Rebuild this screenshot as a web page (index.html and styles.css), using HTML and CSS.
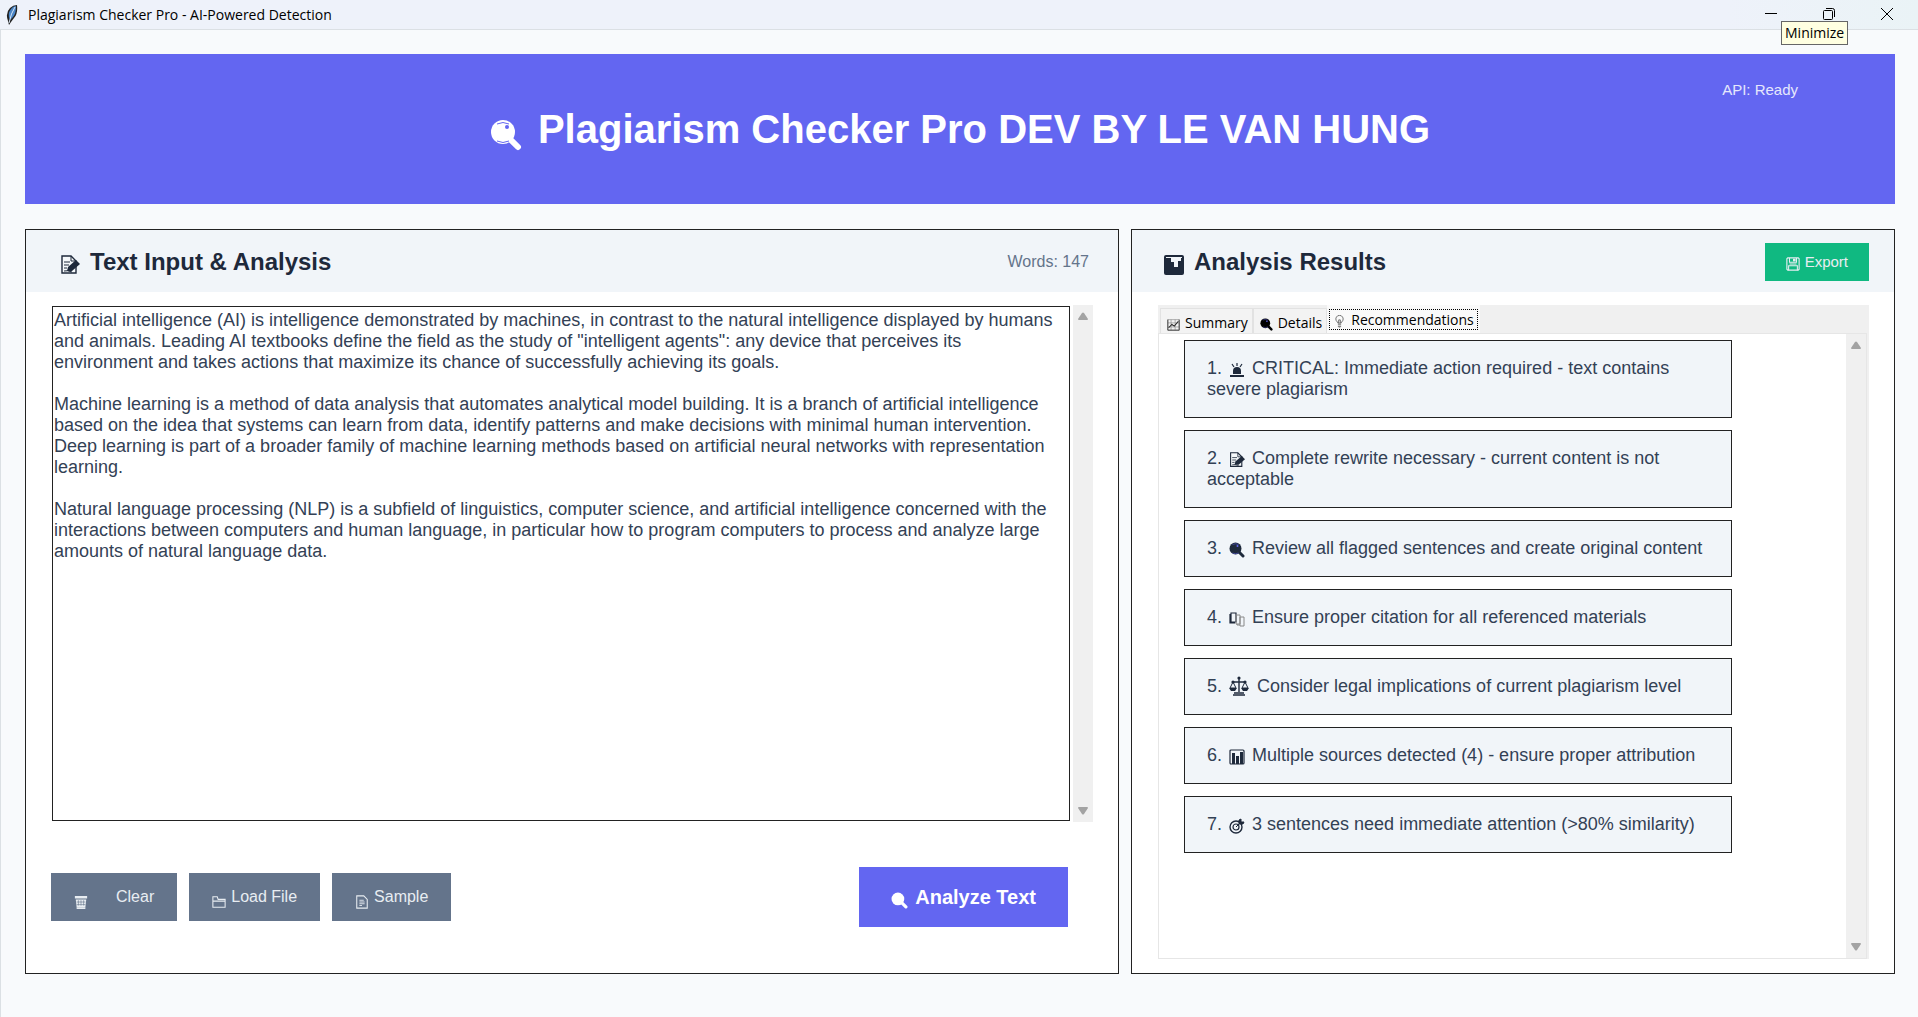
FILE: index.html
```html
<!DOCTYPE html>
<html lang="en">
<head>
<meta charset="utf-8">
<title>Plagiarism Checker Pro - AI-Powered Detection</title>
<link rel="stylesheet" href="styles.css">
</head>
<body>
<svg class="sprite" aria-hidden="true">
  <symbol id="lens" viewBox="0 0 32 32">
    <path d="M20 20l8 8" stroke="currentColor" stroke-width="6" stroke-linecap="round"/>
    <circle cx="13" cy="13" r="12" fill="currentColor"/>
    <path d="M7 5q6-3 12 0M7 22q6 3 12 0" fill="none" stroke="var(--shine)" stroke-width="1"/>
    <circle cx="17" cy="8" r="2" fill="var(--shine)"/>
  </symbol>
  <symbol id="memo" viewBox="0 0 20 20">
    <path d="M2 1h9l5 5v12H2z" fill="#fff" fill-opacity=".4" stroke="currentColor" stroke-width="1.400"/>
    <path d="M11 1v5h5M4 7h6M4 10h5M4 13h3" fill="none" stroke="currentColor" stroke-width="1"/>
    <path d="M7 16l1-4 8-7 4 4-8 7z" fill="currentColor"/>
    <path d="M4 16q3-1 8 1" stroke="currentColor" fill="none"/>
  </symbol>
  <symbol id="report" viewBox="0 0 20 20">
    <rect x="0" y="0" width="20" height="20" rx="2" fill="currentColor"/>
    <path d="M2 2h16v1H2zM7 3h10v3h-3v6h-4V7H7z" fill="#f1f5f9"/>
  </symbol>
  <symbol id="floppy" viewBox="0 0 16 16">
    <path d="M2 1h12l1 1v12l-1 1H2l-1-1V2z" fill="none" stroke="currentColor" stroke-width="1.300"/>
    <path d="M4 1v5h8V1M3 15v-5h10v5M4 8h8" fill="none" stroke="currentColor" stroke-width="1.200"/>
    <path d="M8 2h3v3H8z" fill="currentColor"/>
  </symbol>
  <symbol id="trash" viewBox="0 0 16 16">
    <path d="M1 1h14v3H1zM2 5h12l-1 9H3z" fill="currentColor"/>
    <path d="M5 6v6M8 6v6M11 6v6M3 8h10M3 11h10" stroke="#64748b" stroke-width=".7"/>
    <path d="M3 14h10v2H3z" fill="currentColor"/>
  </symbol>
  <symbol id="folder" viewBox="0 0 16 16">
    <path d="M1 14V2h5l1 3h8v9zM1 7h14" fill="none" stroke="currentColor" stroke-width="1.200"/>
  </symbol>
  <symbol id="page" viewBox="0 0 16 16">
    <path d="M2 1h8l4 4v10H2z" fill="none" stroke="currentColor" stroke-width="1.200"/>
    <path d="M5 6h5M5 8h6M5 10h6M5 12h3" stroke="currentColor" stroke-width="1"/>
  </symbol>
  <symbol id="trend" viewBox="0 0 16 16">
    <path d="M1 2h14v13H1zM1 6h14M1 11h14M5 2v13M10 2v13" fill="none" stroke="#888" stroke-width=".8"/>
    <path d="M1 2v13h14V2" fill="none" stroke="#333"/>
    <path d="M2 12l4-4 3 2 5-6" fill="none" stroke="#222" stroke-width="1.300"/>
  </symbol>
  <symbol id="bulb" viewBox="0 0 16 16">
    <path d="M6 10q0-1-2-3a4.500 4.500 0 1 1 8 0q-2 2-2 3z" fill="none" stroke="#555"/>
    <path d="M7 10V6h2v4M6 12h4M6 14h4M7 16h2" fill="none" stroke="#555"/>
  </symbol>
  <symbol id="siren" viewBox="0 0 16 16">
    <path d="M4 12V9a4 4 0 0 1 8 0v3zM1 13h14v2H1z" fill="currentColor"/>
    <path d="M8 1v3M3 2l2 3M13 2l-2 3" stroke="currentColor" stroke-width="1.200"/>
  </symbol>
  <symbol id="books" viewBox="0 0 16 16">
    <path d="M2 2h5v9H2zM1 3v9h5" fill="none" stroke="currentColor" stroke-width="1.200"/>
    <path d="M7 4h4v9H7zM11 6h4v9h-4zM8 13v1h3" fill="none" stroke="#888"/>
  </symbol>
  <symbol id="scales" viewBox="0 0 20 20">
    <path d="M10 2v14M5 17h10M4 19h12M3 6h14" stroke="currentColor" stroke-width="1.400" fill="none"/>
    <circle cx="10" cy="2" r="1.600" fill="currentColor"/><circle cx="4" cy="6" r="1.600" fill="currentColor"/><circle cx="16" cy="6" r="1.600" fill="currentColor"/>
    <path d="M4 6l-3 6h6zM16 6l-3 6h6z" fill="none" stroke="currentColor"/>
    <path d="M0 12h8l-2 3H2zM12 12h8l-2 3h-4z" fill="currentColor"/>
  </symbol>
  <symbol id="bars" viewBox="0 0 16 16">
    <rect x="1" y="1" width="14" height="14" rx="1" fill="none" stroke="currentColor" stroke-width="1.200"/>
    <path d="M3 4h3v11H3zM7 7h3v8H7zM11 3h3v12h-3z" fill="currentColor"/>
  </symbol>
  <symbol id="target" viewBox="0 0 16 16">
    <circle cx="7" cy="9" r="6" fill="none" stroke="currentColor" stroke-width="1.400"/>
    <circle cx="7" cy="9" r="3" fill="none" stroke="currentColor" stroke-width="1.200"/>
    <path d="M7 9l5-5M10 5V2l2-1v3h3l-1 2h-4z" stroke="currentColor" fill="currentColor"/>
  </symbol>
  <symbol id="up" viewBox="0 0 12 10"><path d="M1 8l4-6q1-1 2 0l4 6q0 1-1 1H2q-1 0-1-1z" fill="#a3a3a3"/></symbol>
  <symbol id="down" viewBox="0 0 12 10"><path d="M1 2l4 6q1 1 2 0l4-6q0-1-1-1H2q-1 0-1 1z" fill="#a3a3a3"/></symbol>
</svg>

<header class="titlebar">
  <svg class="feather" viewBox="0 0 12 20" aria-hidden="true">
    <path d="M11 0q1 9-3 13l-3 4-2 3-1-4Q-1 8 4 3q3-3 7-3z" fill="#222"/>
    <path d="M10 1q0 8-3 11l-3 3q-3-6 1-11 2-3 5-3z" fill="#4a86c8"/>
    <path d="M9 2Q5 8 3 18" stroke="#d8e6f4" fill="none"/>
  </svg>
  <span class="window-title">Plagiarism Checker Pro - AI-Powered Detection</span>
  <div class="controls">
    <button aria-label="Minimize"><svg viewBox="0 0 14 14"><path d="M1 6.500h12"/></svg></button>
    <button aria-label="Restore"><svg viewBox="0 0 14 14"><rect x="1.500" y="3.500" width="9" height="9" rx="1"/><path d="M4 1.500h6.500q2 0 2 2V10"/></svg></button>
    <button aria-label="Close"><svg viewBox="0 0 14 14"><path d="M1 1l12 12M13 1L1 13"/></svg></button>
    <span class="tooltip" role="tooltip">Minimize</span>
  </div>
</header>

<main class="app">
  <section class="banner">
    <h1><svg class="lens-large"><use href="#lens"/></svg>Plagiarism Checker Pro DEV BY LE VAN HUNG</h1>
    <span class="status">API: Ready</span>
  </section>

  <div class="panels">
    <section class="panel">
      <div class="panel-head">
        <h2><svg><use href="#memo"/></svg><label for="source">Text Input &amp; Analysis</label></h2>
        <span class="words">Words: 147</span>
      </div>
      <div class="editor">
        <textarea id="source" spellcheck="false">Artificial intelligence (AI) is intelligence demonstrated by machines, in contrast to the natural intelligence displayed by humans and animals. Leading AI textbooks define the field as the study of "intelligent agents": any device that perceives its environment and takes actions that maximize its chance of successfully achieving its goals.

Machine learning is a method of data analysis that automates analytical model building. It is a branch of artificial intelligence based on the idea that systems can learn from data, identify patterns and make decisions with minimal human intervention. Deep learning is part of a broader family of machine learning methods based on artificial neural networks with representation learning.

Natural language processing (NLP) is a subfield of linguistics, computer science, and artificial intelligence concerned with the interactions between computers and human language, in particular how to program computers to process and analyze large amounts of natural language data.</textarea>
        <div class="scrollbar"><svg><use href="#up"/></svg><svg><use href="#down"/></svg></div>
      </div>
      <div class="actions">
        <button class="btn spaced"><svg><use href="#trash"/></svg>Clear</button>
        <button class="btn"><svg><use href="#folder"/></svg>Load File</button>
        <button class="btn"><svg><use href="#page"/></svg>Sample</button>
        <button class="btn primary"><svg><use href="#lens"/></svg>Analyze Text</button>
      </div>
    </section>

    <section class="panel">
      <div class="panel-head results-head">
        <h2><svg><use href="#report"/></svg>Analysis Results</h2>
        <button class="btn export"><svg><use href="#floppy"/></svg>Export</button>
      </div>
      <div class="notebook">
        <div class="tabs" role="tablist">
          <button class="tab" role="tab"><svg><use href="#trend"/></svg>Summary</button>
          <button class="tab" role="tab"><svg><use href="#lens"/></svg>Details</button>
          <button class="tab active" role="tab" aria-selected="true"><span><svg><use href="#bulb"/></svg>Recommendations</span></button>
        </div>
        <div class="tab-body">
          <ul class="cards">
            <li>1. <svg><use href="#siren"/></svg> CRITICAL: Immediate action required - text contains severe plagiarism</li>
            <li>2. <svg><use href="#memo"/></svg> Complete rewrite necessary - current content is not acceptable</li>
            <li>3. <svg><use href="#lens"/></svg> Review all flagged sentences and create original content</li>
            <li>4. <svg><use href="#books"/></svg> Ensure proper citation for all referenced materials</li>
            <li>5. <svg class="wide"><use href="#scales"/></svg> Consider legal implications of current plagiarism level</li>
            <li>6. <svg><use href="#bars"/></svg> Multiple sources detected (4) - ensure proper attribution</li>
            <li>7. <svg><use href="#target"/></svg> 3 sentences need immediate attention (&gt;80% similarity)</li>
          </ul>
          <div class="scrollbar"><svg><use href="#up"/></svg><svg><use href="#down"/></svg></div>
        </div>
      </div>
    </section>
  </div>
</main>
</body>
</html>
```
FILE: styles.css
```css
* { box-sizing: border-box; }

body {
  --shine: #6366f1;
  margin: 0;
  min-height: 100vh;
  display: flex;
  flex-direction: column;
  background: #f8fafc;
  color: #1e293b;
  font-family: "Liberation Sans", Arial, sans-serif;
  font-size: 18px;
  line-height: 21px;
}

h1, h2, ul { margin: 0; padding: 0; }
button { border: 0; margin: 0; font-family: inherit; }
.sprite { position: absolute; width: 0; height: 0; }

/* window frame */
.titlebar {
  display: flex;
  align-items: center;
  height: 30px;
  padding: 0 2px 0 6px;
  background: linear-gradient(90deg, #eef2fa 90%, #eaf3f6);
  border-bottom: 1px solid #dbe0e4;
  color: #000;
  font-family: "Open Sans", "Noto Sans", sans-serif;
  font-size: 14px;
}
.feather { width: 12px; height: 20px; margin-right: 10px; }
.controls { position: relative; align-self: flex-start; display: flex; margin-left: auto; }
.controls button { display: flex; align-items: center; justify-content: center; width: 58px; height: 28px; padding: 0; background: none; }
.controls svg { width: 14px; height: 14px; fill: none; stroke: #000; }
.tooltip {
  position: absolute;
  top: 21px;
  left: 39px;
  padding: 0 3px 1px;
  border: 1px solid #666;
  background: #ffffe1;
}

.app {
  flex: 1;
  display: flex;
  flex-direction: column;
  gap: 25px;
  padding: 24px 23px 43px 24px;
  border-left: 1px solid #dbe0e4;
}

/* banner */
.banner {
  display: grid;
  grid-template-columns: 1fr auto 1fr;
  align-items: center;
  min-height: 150px;
  background: #6366f1;
  color: #fff;
}
.banner h1 { grid-column: 2; display: flex; align-items: center; font-size: 40px; line-height: 48px; }
.lens-large { width: 32px; height: 32px; margin: 12px 16px 0 0; }
.status { justify-self: end; align-self: start; padding: 25px 97px 0 0; font-size: 15px; color: #e6e8fc; }

/* panels */
.panels { flex: 1; display: grid; grid-template-columns: 1094fr 764fr; gap: 12px; }
.panel { display: flex; flex-direction: column; min-width: 0; background: #fff; border: 1px solid #222; }
.panel-head {
  display: flex;
  align-items: center;
  justify-content: space-between;
  min-height: 62px;
  padding: 1px 29px 0 34px;
  background: #f1f5f9;
}
.panel-head h2 { display: flex; align-items: center; font-size: 24px; line-height: 28px; }
.panel-head h2 svg { width: 20px; height: 20px; margin: 6px 10px 0 0; }
.words { color: #64748b; font-size: 16px; }
.results-head { padding: 1px 25px 0 32px; }

.editor { flex: 1; display: flex; gap: 3px; margin: 13px 25px 0 26px; }
.editor textarea {
  flex: 1;
  margin: 1px 0;
  padding: 3px 6px 1px 1px;
  border: 1px solid #222;
  background: #fff;
  color: #334155;
  font: inherit;
  resize: none;
  overflow: hidden;
}
.scrollbar {
  display: flex;
  flex-direction: column;
  justify-content: space-between;
  align-items: center;
  width: 20px;
  padding: 6px 0;
  background: #f0f0f0;
}
.scrollbar svg { width: 12px; height: 10px; }

.actions { display: flex; align-items: center; gap: 12px; margin: 45px 50px 46px 25px; }
.btn {
  --shine: transparent;
  display: flex;
  align-items: center;
  gap: 5px;
  height: 48px;
  padding: 0 23px;
  background: #64748b;
  color: #e8edf2;
  font-size: 16px;
}
.btn svg { width: 14px; height: 14px; margin-top: 10px; }
.spaced { gap: 28px; }
.primary { height: 60px; margin-left: auto; padding: 0 32px; gap: 7px; background: #6366f1; color: #fff; font-size: 20px; font-weight: bold; }
.primary svg { width: 17px; height: 17px; margin-top: 6px; }
.export { height: 38px; padding: 0 21px; background: #10b981; font-size: 15px; }
.export svg { margin-top: 5px; }

/* notebook */
.notebook { flex: 1; display: flex; flex-direction: column; margin: 13px 25px 14px 26px; background: #f0f0f0; }
.tabs { display: flex; align-items: flex-end; padding-left: 2px; font-family: "Open Sans", "Noto Sans", sans-serif; }
.tab {
  display: flex;
  align-items: center;
  height: 25px;
  padding: 2px 4px 0 6px;
  border: 1px solid #e2e2e2;
  border-width: 1px 1px 0;
  background: #f3f3f3;
  color: #000;
  font-size: 14px;
}
.tab svg { width: 13px; height: 13px; margin: 4px 5px 0 0; }
.tab.active { height: 28px; padding: 0 2px; border: 0; background: #fafafa; }
.tab.active span { display: flex; align-items: center; height: 21px; padding: 0 3px; border: 1px dotted #000; }
.tab-body { flex: 1; display: flex; justify-content: space-between; margin-right: 2px; background: #fff; border: 1px solid #e6e6e6; }
.cards { display: flex; flex-direction: column; gap: 12px; width: 573px; padding: 6px 0 6px 25px; list-style: none; }
.cards li { padding: 17px 22px; border: 1px solid #222; background: #f1f5f9; color: #334155; }
.cards svg { width: 16px; height: 16px; margin: 0 2px; color: #1e293b; vertical-align: -4px; }
.cards svg.wide { width: 20px; height: 20px; margin: 0 3px 0 2px; }
```
